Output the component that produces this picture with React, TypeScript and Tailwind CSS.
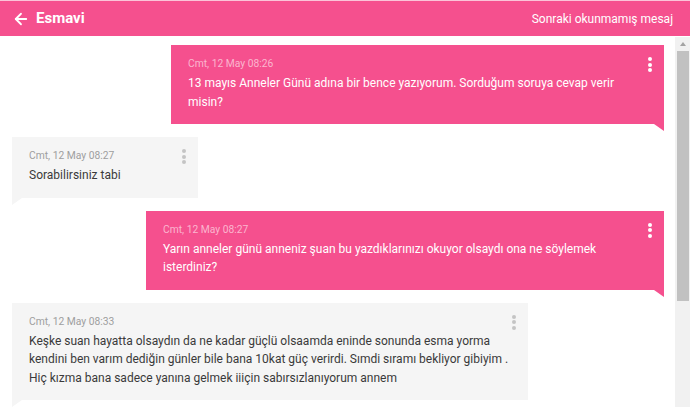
import React from 'react';
import { ArrowLeft } from 'lucide-react';

interface Message {
  id: number;
  mine: boolean;
  time: string;
  text: string;
  width: string;
}

const messages: Message[] = [
  {
    id: 1,
    mine: true,
    time: 'Cmt, 12 May 08:26',
    text: '13 mayıs Anneler Günü adına bir bence yazıyorum. Sorduğum soruya cevap verir misin?',
    width: 'w-[493px] pr-[24px]',
  },
  {
    id: 2,
    mine: false,
    time: 'Cmt, 12 May 08:27',
    text: 'Sorabilirsiniz tabi',
    width: 'w-[186px] pr-[24px]',
  },
  {
    id: 3,
    mine: true,
    time: 'Cmt, 12 May 08:27',
    text: 'Yarın anneler günü anneniz şuan bu yazdıklarınızı okuyor olsaydı ona ne söylemek isterdiniz?',
    width: 'w-[518px] pr-[24px]',
  },
  {
    id: 4,
    mine: false,
    time: 'Cmt, 12 May 08:33',
    text: 'Keşke suan hayatta olsaydın da ne kadar güçlü olsaamda eninde sonunda esma yorma kendini ben varım dediğin günler bile bana 10kat güç verirdi. Sımdi sıramı bekliyor gibiyim . Hiç kızma bana sadece yanına gelmek iiiçin sabırsızlanıyorum annem',
    width: 'w-[516px] pr-[14px]',
  },
];

const Dots = ({ mine }: { mine: boolean }) => (
  <div className="absolute top-[12px] right-[12px] flex flex-col gap-[1.5px]">
    {[0, 1, 2].map(i => (
      <span
        key={i}
        className={`block w-[4px] h-[4px] rounded-full ${mine ? 'bg-white' : 'bg-[#c4c4c4]'}`}
      />
    ))}
  </div>
);

const Bubble = ({ msg }: { msg: Message }) => (
  <div className={`flex ${msg.mine ? 'justify-end pr-[11px]' : 'justify-start pl-[12px]'}`}>
    <div
      className={`relative ${msg.width} pl-[17px] pt-[12px] pb-[13px] ${
        msg.mine ? 'bg-[#f5508e]' : 'bg-[#f5f5f5]'
      }`}
    >
      <p className={`text-[10.3px] leading-[14px] ${msg.mine ? 'text-[#fbb6cf]' : 'text-[#9e9e9e]'}`}>
        {msg.time}
      </p>
      <p className={`mt-[3px] text-[12px] leading-[18.5px] ${msg.mine ? 'text-white' : 'text-[#3a3a3a]'}`}>
        {msg.text}
      </p>
      <Dots mine={msg.mine} />
      {/* bubble tail */}
      {msg.mine ? (
        <span className="absolute right-0 bottom-[-7px] w-0 h-0 border-t-[7px] border-t-[#f5508e] border-l-[10px] border-l-transparent" />
      ) : (
        <span className="absolute left-0 bottom-[-7px] w-0 h-0 border-t-[7px] border-t-[#f5f5f5] border-r-[10px] border-r-transparent" />
      )}
    </div>
  </div>
);

export default function App() {
  return (
    <div className="w-[690px] h-[407px] overflow-hidden bg-white flex flex-col font-['Roboto',sans-serif]">
      {/* Header */}
      <div className="h-[36px] shrink-0 bg-[#f5508e] border-t border-t-[#fbc4d8] flex items-center justify-between pl-[12px] pr-[17px] text-white">
        <div className="flex items-center gap-[6px]">
          <ArrowLeft className="w-[18px] h-[18px]" strokeWidth={2.4} />
          <span className="text-[15px] font-bold">Esmavi</span>
        </div>
        <span className="text-[12px]">Sonraki okunmamış mesaj</span>
      </div>

      <div className="flex flex-1 min-h-0 pt-[1px]">
        {/* Messages */}
        <div className="flex-1 flex flex-col gap-[13px] pt-[8px] overflow-hidden">
          {messages.map(m => (
            <Bubble key={m.id} msg={m} />
          ))}
        </div>

        {/* Scrollbar */}
        <div className="w-[15px] shrink-0 bg-[#f1f1f1] flex flex-col items-center">
          <span className="mt-[5px] w-0 h-0 border-b-[4px] border-b-[#a3a3a3] border-l-[3.5px] border-l-transparent border-r-[3.5px] border-r-transparent" />
          <div className="mt-[5px] w-[12px] h-[250px] bg-[#c1c1c1]" />
        </div>
      </div>
    </div>
  );
}
